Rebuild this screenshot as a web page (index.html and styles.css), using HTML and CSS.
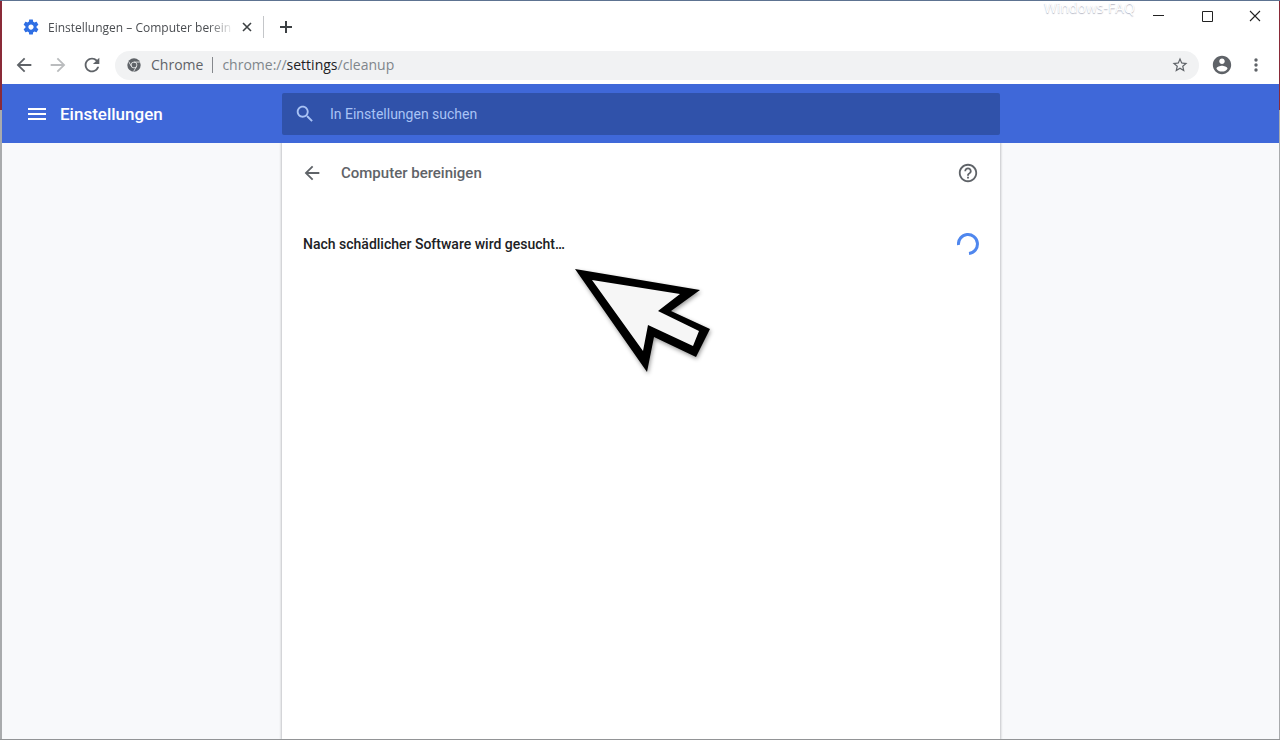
FILE: index.html
```html
<!DOCTYPE html>
<html lang="de">
<head>
  <meta charset="UTF-8" />
  <meta name="viewport" content="width=device-width, initial-scale=1.0"/>
  <title>Einstellungen – Computer bereinigen</title>
  <link rel="stylesheet" href="styles.css">
</head>
<body>

  <div class="window">
    <div class="tabstrip">
      <div class="tab">
        <svg class="favicon" width="18" height="18" viewBox="0 0 24 24" fill="#2f6fe4" aria-hidden="true">
          <path d="M19.43 12.98c.04-.32.07-.64.07-.98s-.03-.66-.07-.98l2.11-1.65c.19-.15.24-.42.12-.64l-2-3.46c-.12-.22-.39-.3-.61-.22l-2.49 1c-.52-.4-1.08-.73-1.69-.98l-.38-2.65C14.46 2.18 14.25 2 14 2h-4c-.25 0-.46.18-.49.42l-.38 2.65c-.61.25-1.17.59-1.69.98l-2.49-1c-.23-.09-.49 0-.61.22l-2 3.46c-.13.22-.07.49.12.64l2.11 1.65c-.04.32-.07.65-.07.98s.03.66.07.98l-2.11 1.65c-.19.15-.24.42-.12.64l2 3.46c.12.22.39.3.61.22l2.49-1c.52.4 1.08.73 1.69.98l.38 2.65c.03.24.24.42.49.42h4c.25 0 .46-.18.49-.42l.38-2.65c.61-.25 1.17-.59 1.69-.98l2.49 1c.23.09.49 0 .61-.22l2-3.46c.12-.22.07-.49-.12-.64l-2.11-1.65zM12 15.5c-1.93 0-3.5-1.57-3.5-3.5s1.57-3.5 3.5-3.5 3.5 1.57 3.5 3.5-1.57 3.5-3.5 3.5z"/>
        </svg>
        <span class="tab-title">Einstellungen – Computer berein</span>
        <button class="tab-close" aria-label="Tab schließen">
          <svg width="10" height="10" viewBox="0 0 10 10" fill="none" stroke="#3c4043" stroke-width="1.6"><path d="M1 1l8 8M9 1l-8 8"/></svg>
        </button>
      </div>
      <button class="new-tab" aria-label="Neuer Tab">
        <svg width="14" height="14" viewBox="0 0 14 14" fill="none" stroke="#3c4043" stroke-width="2"><path d="M7 1v12M1 7h12"/></svg>
      </button>
      <span class="watermark">Windows-FAQ</span>
      <div class="window-buttons">
        <button aria-label="Minimieren">
          <svg width="12" height="12" viewBox="0 0 12 12" stroke="#222"><path d="M0 5.500h11"/></svg>
        </button>
        <button aria-label="Maximieren">
          <svg width="12" height="12" viewBox="0 0 12 12" fill="none" stroke="#222"><path d="M1.500 1.500h10v10h-10z"/></svg>
        </button>
        <button aria-label="Schließen">
          <svg width="12" height="12" viewBox="0 0 12 12" stroke="#222" stroke-width="1.100"><path d="M1 1l10 10M11 1L1 11"/></svg>
        </button>
      </div>
    </div>

    <div class="toolbar">
      <div class="nav-buttons">
        <button aria-label="Zurück">
          <svg width="22" height="22" viewBox="0 0 24 24" fill="#5f6368"><path d="M20 11H7.830l5.590-5.590L12 4l-8 8 8 8 1.410-1.410L7.830 13H20v-2z"/></svg>
        </button>
        <button aria-label="Vorwärts">
          <svg width="22" height="22" viewBox="0 0 24 24" fill="#babcbe"><path d="M12 4l-1.410 1.410L16.170 11H4v2h12.170l-5.580 5.590L12 20l8-8z"/></svg>
        </button>
        <button aria-label="Neu laden">
          <svg width="22" height="22" viewBox="0 0 24 24" fill="#5f6368"><path d="M17.650 6.350C16.200 4.900 14.210 4 12 4c-4.420 0-7.990 3.580-7.990 8s3.570 8 7.990 8c3.730 0 6.840-2.550 7.730-6h-2.080c-.82 2.330-3.040 4-5.650 4-3.310 0-6-2.690-6-6s2.690-6 6-6c1.660 0 3.140.69 4.220 1.780L13 11h7V4l-2.350 2.350z"/></svg>
        </button>
      </div>
      <div class="omnibox">
        <svg width="14" height="14" viewBox="0 0 24 24" aria-hidden="true">
          <circle cx="12" cy="12" r="11.500" fill="#5f6368"/>
          <g stroke="#f1f3f4" stroke-width="1.400" fill="none">
            <circle cx="12" cy="12" r="5"/>
            <path d="M12 7h10M7.670 14.500L2.700 5.900M16.330 14.500L11.300 23.200"/>
          </g>
        </svg>
        <span class="scheme-label">Chrome</span>
        <span class="url">chrome://<b>settings</b>/cleanup</span>
        <button class="star" aria-label="Lesezeichen">
          <svg width="18" height="18" viewBox="0 0 24 24" fill="#5f6368"><path d="M22 9.240l-7.190-.62L12 2 9.190 8.630 2 9.240l5.460 4.730L5.820 21 12 17.270 18.180 21l-1.630-7.030L22 9.240zM12 15.400l-3.760 2.270 1-4.280-3.320-2.880 4.380-.38L12 6.100l1.710 4.040 4.380.38-3.320 2.880 1 4.280L12 15.400z"/></svg>
        </button>
      </div>
      <button class="profile" aria-label="Profil">
        <svg width="22" height="22" viewBox="0 0 24 24" fill="#5f6368"><path d="M12 2C6.480 2 2 6.480 2 12s4.480 10 10 10 10-4.480 10-10S17.520 2 12 2zm0 3c1.660 0 3 1.340 3 3s-1.340 3-3 3-3-1.340-3-3 1.340-3 3-3zm0 14.200c-2.500 0-4.710-1.280-6-3.220.03-1.990 4-3.080 6-3.080 1.990 0 5.970 1.090 6 3.080-1.290 1.940-3.500 3.220-6 3.220z"/></svg>
      </button>
      <button class="menu" aria-label="Menü">
        <svg width="4" height="14" viewBox="0 0 4 14" fill="#5f6368"><circle cx="2" cy="2" r="1.700"/><circle cx="2" cy="7" r="1.700"/><circle cx="2" cy="12" r="1.700"/></svg>
      </button>
    </div>

    <header>
      <div class="brand">
        <button aria-label="Hauptmenü">
          <svg width="18" height="14" viewBox="0 0 18 14" fill="#fff"><path d="M0 1h18v2H0zM0 6h18v2H0zM0 11h18v2H0z"/></svg>
        </button>
        <h1>Einstellungen</h1>
      </div>
      <label class="search">
        <svg width="22" height="22" viewBox="0 0 24 24" fill="#a9c3f5" aria-hidden="true"><path d="M15.500 14h-.79l-.28-.27C15.410 12.590 16 11.110 16 9.500 16 5.910 13.090 3 9.500 3S3 5.910 3 9.500 5.910 16 9.500 16c1.610 0 3.090-.59 4.230-1.570l.27.28v.79l5 4.990L20.490 19l-4.990-5zm-6 0C7.010 14 5 11.990 5 9.500S7.010 5 9.500 5 14 7.010 14 9.500 11.990 14 9.500 14z"/></svg>
        <input type="text" placeholder="In Einstellungen suchen" aria-label="In Einstellungen suchen" />
      </label>
    </header>

    <main>
      <section class="card">
        <div class="card-title">
          <button aria-label="Zurück">
            <svg width="22" height="22" viewBox="0 0 24 24" fill="#5f6368"><path d="M20 11H7.830l5.590-5.590L12 4l-8 8 8 8 1.410-1.410L7.830 13H20v-2z"/></svg>
          </button>
          <h2>Computer bereinigen</h2>
          <button aria-label="Hilfe">
            <svg width="22" height="22" viewBox="0 0 24 24" fill="#5f6368"><path d="M11 18h2v-2h-2v2zm1-16C6.480 2 2 6.480 2 12s4.480 10 10 10 10-4.480 10-10S17.520 2 12 2zm0 18c-4.410 0-8-3.590-8-8s3.590-8 8-8 8 3.590 8 8-3.590 8-8 8zm0-14c-2.210 0-4 1.790-4 4h2c0-1.100.9-2 2-2s2 .9 2 2c0 2-3 1.750-3 5h2c0-2.250 3-2.500 3-5 0-2.210-1.790-4-4-4z"/></svg>
          </button>
        </div>
        <div class="scan">
          <p>Nach schädlicher Software wird gesucht…</p>
          <svg width="22" height="22" viewBox="0 0 22 22" fill="none" stroke="#4f87ee" stroke-width="3" aria-hidden="true"><path d="M1.500 12A9.500 9.500 0 1 1 12 20.450"/></svg>
        </div>
        <svg class="pointer" width="150" height="120" viewBox="0 0 150 120" aria-hidden="true">
          <path d="M5 9L130 30 101 51 140 69 126 97 84 77 77 112z" fill="#000"/>
          <path d="M22 20L110 34 88 51 129 71 123 86 78 65 73 91z" fill="#f6f6f6"/>
        </svg>
      </section>
    </main>
  </div>

</body>
</html>
```
FILE: styles.css
```css
* {
  box-sizing: border-box;
}

body {
  margin: 0;
  font-family: Roboto, Arial, sans-serif;
}

button {
  display: flex;
  align-items: center;
  justify-content: center;
  padding: 0;
  border: none;
  background: none;
  cursor: pointer;
}

/* the desktop shows through along the window's edges */
.window {
  display: flex;
  flex-direction: column;
  min-height: 100vh;
  padding: 0 1px 0 2px;
  border-top: 1px solid #5d7391;
  border-bottom: 1px solid #929496;
  background: linear-gradient(#8a2a38 109px, #a9abad 109px);
}

/* tab strip */
.tabstrip {
  display: flex;
  align-items: center;
  height: 45px;
  padding-top: 7px;
  background: #fff;
}

.tab {
  display: flex;
  align-items: center;
  width: 262px;
  height: 22px;
  padding-left: 20px;
  border-right: 1px solid #c4c6c9;
  font-family: "Open Sans", "Noto Sans", sans-serif;
  font-size: 12px;
  color: #4a4d51;
}

.favicon {
  flex: none;
}

.tab-title {
  width: 186px;
  margin-left: 8px;
  white-space: nowrap;
  -webkit-mask-image: linear-gradient(to right, #000 86%, transparent);
  mask-image: linear-gradient(to right, #000 86%, transparent);
}

.tab-close {
  width: 26px;
}

.new-tab {
  width: 44px;
}

.watermark {
  align-self: flex-start;
  margin: -9px 0 0 auto;
  font-family: "Open Sans", sans-serif;
  font-size: 14px;
  line-height: 18px;
  color: #fff;
  text-shadow: 0 1px 1px #b4b6c4;
}

.window-buttons {
  display: flex;
  align-self: flex-start;
}

.window-buttons button {
  width: 48px;
  height: 16px;
}

/* toolbar */
.toolbar {
  display: flex;
  align-items: center;
  height: 38px;
  background: #fff;
}

.nav-buttons {
  display: flex;
  padding: 0 6px 0 5px;
}

.nav-buttons button {
  width: 34px;
}

.omnibox {
  display: flex;
  flex: 1;
  align-items: center;
  height: 29px;
  padding: 0 10px 0 12px;
  border-radius: 15px;
  background: #f1f2f3;
  font-family: "Open Sans", "Noto Sans", sans-serif;
  font-size: 14px;
  line-height: 16px;
  color: #5f6368;
}

.scheme-label {
  margin-left: 10px;
  padding-right: 9px;
  border-right: 1px solid #85888c;
}

.url {
  padding-left: 9px;
  color: #80868b;
}

.url b {
  font-weight: 400;
  color: #202124;
}

.star {
  margin-left: auto;
}

.profile {
  width: 46px;
}

.menu {
  width: 22px;
  margin-right: 12px;
}

/* settings header */
header {
  display: grid;
  grid-template-columns: 1fr minmax(0, 718px) 1fr;
  align-items: center;
  height: 59px;
  padding-left: 1px;
  background: #3f68d9;
}

.brand {
  display: flex;
  align-items: center;
  gap: 14px;
  padding-left: 25px;
}

h1 {
  margin: 0;
  font-size: 17px;
  font-weight: 500;
  color: #fff;
}

.search {
  display: flex;
  align-items: center;
  height: 42px;
  padding-left: 12px;
  border-radius: 2px;
  background: #3052aa;
}

.search input {
  flex: 1;
  padding: 0 0 0 14px;
  border: none;
  outline: none;
  background: none;
  font-family: inherit;
  font-size: 14px;
}

.search input::placeholder {
  color: #a9c3f5;
  opacity: 1;
}

/* content */
main {
  display: flex;
  flex: 1;
  justify-content: center;
  padding-left: 1px;
  background: #f8f9fb;
}

.card {
  position: relative;
  width: 100%;
  max-width: 718px;
  background: #fff;
  box-shadow: 0 0 2px 1px #c3c5c8;
  clip-path: inset(0 -4px);
}

.card-title {
  display: flex;
  align-items: center;
  height: 60px;
  padding: 0 21px 0 19px;
}

h2 {
  flex: 1;
  margin: 0 0 0 18px;
  font-size: 15px;
  font-weight: 500;
  color: #5f6368;
}

.scan {
  display: flex;
  align-items: center;
  justify-content: space-between;
  height: 60px;
  margin-top: 11px;
  padding: 0 21px;
}

.scan p {
  margin: 0;
  font-size: 14px;
  font-weight: 500;
  color: #202124;
}

.pointer {
  position: absolute;
  top: 117px;
  left: 288px;
  filter: drop-shadow(1px 2px 2px rgba(0, 0, 0, 0.4));
}
```
